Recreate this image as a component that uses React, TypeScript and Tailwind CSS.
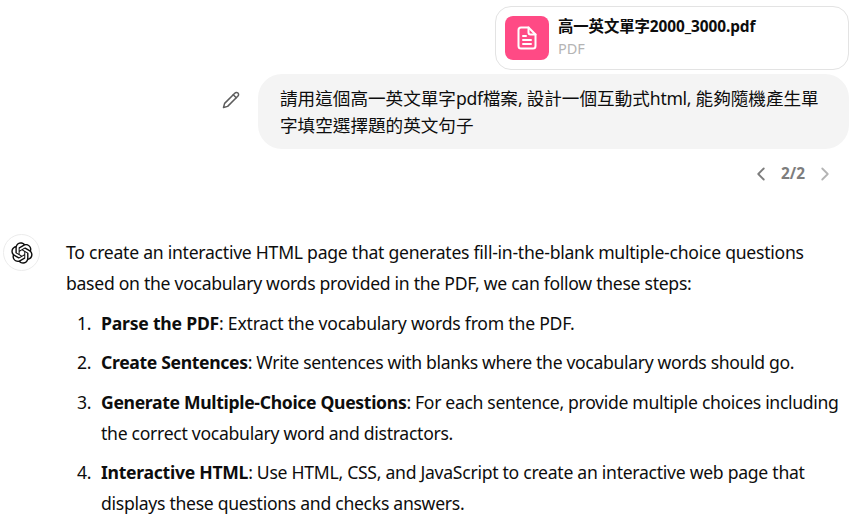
const LOGO = "M37.5324 16.8707C37.9808 15.5241 38.1363 14.0974 37.9886 12.6859C37.8409 11.2744 37.3934 9.91076 36.676 8.68622C35.6126 6.83404 33.9882 5.3676 32.0373 4.4985C30.0864 3.62941 27.9098 3.40259 25.8215 3.85078C24.8796 2.7893 23.7219 1.94125 22.4257 1.36341C21.1295 0.785575 19.7249 0.491269 18.3058 0.500197C16.1708 0.495044 14.0893 1.16803 12.3614 2.42214C10.6335 3.67624 9.34853 5.44666 8.6917 7.47815C7.30085 7.76286 5.98686 8.3414 4.8377 9.17505C3.68854 10.0087 2.73073 11.0782 2.02839 12.312C0.956464 14.1591 0.498905 16.2988 0.721698 18.4228C0.944492 20.5467 1.83612 22.5449 3.268 24.1293C2.81966 25.4759 2.66413 26.9026 2.81182 28.3141C2.95951 29.7256 3.40701 31.0892 4.12437 32.3138C5.18791 34.1659 6.8123 35.6322 8.76321 36.5013C10.7141 37.3704 12.8907 37.5973 14.9789 37.1492C15.9208 38.2107 17.0786 39.0587 18.3747 39.6366C19.6709 40.2144 21.0755 40.5087 22.4946 40.4998C24.6307 40.5054 26.7133 39.8321 28.4418 38.5772C30.1704 37.3223 31.4556 35.5506 32.1119 33.5179C33.5027 33.2332 34.8167 32.6547 35.9659 31.821C37.115 30.9874 38.0728 29.9178 38.7752 28.684C39.8458 26.8371 40.3023 24.6979 40.0789 22.5748C39.8556 20.4517 38.9639 18.4544 37.5324 16.8707ZM22.4978 37.8849C20.7443 37.8874 19.0459 37.2733 17.6994 36.1501C17.7601 36.117 17.8666 36.0586 17.936 36.0161L25.9004 31.4156C26.1003 31.3019 26.2663 31.137 26.3813 30.9378C26.4964 30.7386 26.5563 30.5124 26.5549 30.2825V19.0542L29.9213 20.998C29.9389 21.0068 29.9541 21.0198 29.9656 21.0359C29.977 21.052 29.9842 21.0707 29.9867 21.0902V30.3889C29.9842 32.375 29.1946 34.2791 27.7909 35.6841C26.3872 37.0892 24.4838 37.8806 22.4978 37.8849ZM6.39227 31.0064C5.51397 29.4888 5.19742 27.7107 5.49804 25.9832C5.55718 26.0187 5.66048 26.0818 5.73461 26.1244L13.699 30.7248C13.8975 30.8408 14.1233 30.902 14.3532 30.902C14.583 30.902 14.8088 30.8408 15.0073 30.7248L24.731 25.1103V28.9979C24.7321 29.0177 24.7283 29.0376 24.7199 29.0556C24.7115 29.0736 24.6988 29.0893 24.6829 29.1012L16.6317 33.7497C14.9096 34.7416 12.8643 35.0097 10.9447 34.4954C9.02506 33.9811 7.38785 32.7263 6.39227 31.0064ZM4.29707 13.6194C5.17156 12.0998 6.55279 10.9364 8.19885 10.3327C8.19885 10.4013 8.19491 10.5228 8.19491 10.6071V19.808C8.19351 20.0378 8.25334 20.2638 8.36823 20.4629C8.48312 20.6619 8.64893 20.8267 8.84863 20.9404L18.5723 26.5542L15.206 28.4979C15.1894 28.5089 15.1703 28.5155 15.1505 28.5173C15.1307 28.5191 15.1107 28.516 15.0924 28.5082L7.04046 23.8557C5.32135 22.8601 4.06716 21.2235 3.55289 19.3046C3.03862 17.3858 3.30624 15.3413 4.29707 13.6194ZM31.955 20.0556L22.2312 14.4411L25.5976 12.4981C25.6142 12.4872 25.6333 12.4805 25.6531 12.4787C25.6729 12.4769 25.6928 12.4801 25.7111 12.4879L33.7631 17.1364C34.9967 17.849 36.0017 18.8982 36.6606 20.1613C37.3194 21.4244 37.6047 22.849 37.4832 24.2684C37.3617 25.6878 36.8382 27.0432 35.9743 28.1759C35.1103 29.3086 33.9415 30.1717 32.6047 30.6641C32.6047 30.5947 32.6047 30.4733 32.6047 30.3889V21.188C32.6066 20.9586 32.5474 20.7328 32.4332 20.5338C32.319 20.3348 32.154 20.1698 31.955 20.0556ZM35.3055 15.0128C35.2464 14.9765 35.1431 14.9142 35.069 14.8717L27.1045 10.2712C26.906 10.1554 26.6803 10.0943 26.4504 10.0943C26.2206 10.0943 25.9948 10.1554 25.7963 10.2712L16.0726 15.8858V11.9982C16.0715 11.9783 16.0753 11.9585 16.0837 11.9405C16.0921 11.9225 16.1048 11.9068 16.1207 11.8949L24.1719 7.25025C25.4053 6.53903 26.8158 6.19376 28.2383 6.25482C29.6608 6.31589 31.0364 6.78077 32.2044 7.59508C33.3723 8.40939 34.2842 9.53945 34.8334 10.8531C35.3826 12.1667 35.5464 13.6095 35.3055 15.0128ZM14.2424 21.9419L10.8752 19.9981C10.8576 19.9893 10.8423 19.9763 10.8309 19.9602C10.8195 19.9441 10.8122 19.9254 10.8098 19.9058V10.6071C10.8107 9.18295 11.2173 7.78848 11.9819 6.58696C12.7466 5.38544 13.8377 4.42659 15.1275 3.82264C16.4173 3.21869 17.8524 2.99464 19.2649 3.1767C20.6775 3.35876 22.0089 3.93941 23.1034 4.85067C23.0427 4.88379 22.937 4.94215 22.8668 4.98473L14.9024 9.58517C14.7025 9.69878 14.5366 9.86356 14.4215 10.0626C14.3065 10.2616 14.2466 10.4877 14.2479 10.7175L14.2424 21.9419ZM16.071 17.9991L20.4018 15.4978L24.7325 17.9975V22.9985L20.4018 25.4983L16.071 22.9985V17.9991Z";

const items: { n: string; b: string; t: string[]; tr: string }[] = [
  { n: "1.", b: "Parse the PDF", t: [": Extract the vocabulary words from the PDF."], tr: "tracking-[-0.22px]" },
  { n: "2.", b: "Create Sentences", t: [": Write sentences with blanks where the vocabulary words should go."], tr: "tracking-[-0.34px]" },
  { n: "3.", b: "Generate Multiple-Choice Questions", t: [": For each sentence, provide multiple choices including", "the correct vocabulary word and distractors."], tr: "tracking-[-0.33px]" },
  { n: "4.", b: "Interactive HTML", t: [": Use HTML, CSS, and JavaScript to create an interactive web page that", "displays these questions and checks answers."], tr: "tracking-[-0.28px]" },
];

export default function App() {
  return (
    <div className="h-[519px] w-[854px] overflow-hidden bg-white text-[#0d0d0d] font-['Noto_Sans','Noto_Sans_CJK_TC',sans-serif]">
      <div className="flex flex-col items-end pt-[6px] pr-[5px]">
        <div className="flex h-[64px] w-[354px] items-center gap-[9px] rounded-[16px] border border-[#e3e3e3] bg-white pl-[9px]">
          <div className="flex h-[44px] w-[44px] items-center justify-center rounded-[8px] bg-[#ff4a85]">
            <svg width="20" height="24" viewBox="0 0 20 24" fill="none" stroke="white" strokeWidth="2" strokeLinecap="round" strokeLinejoin="round">
              <path d="M4 1.5H11.5L18.5 8.5V20C18.5 21.4 17.4 22.5 16 22.5H4C2.6 22.5 1.5 21.4 1.5 20V4C1.5 2.6 2.6 1.5 4 1.5Z" />
              <path d="M11.5 1.5V6.5C11.5 7.6 12.4 8.5 13.5 8.5H18.5" />
              <path d="M6 10H9" />
              <path d="M6 14H14" />
              <path d="M6 18H14" />
            </svg>
          </div>
          <div className="mb-[2px] flex flex-col">
            <div className="text-[15.4px] leading-[22px] font-bold tracking-[-0.08px] whitespace-nowrap">高一英文單字2000_3000.pdf</div>
            <div className="text-[14.5px] leading-[20px] text-[#b4b4b4]">PDF</div>
          </div>
        </div>
        <div className="mt-[4px] flex items-center gap-[18px]">
          <svg className="mb-[24px] text-[#5d5d5d]" width="18" height="18" viewBox="0 0 24 24" fill="none" stroke="currentColor" strokeWidth="2" strokeLinecap="round" strokeLinejoin="round">
            <path d="M17 3a2.85 2.85 0 1 1 4 4L7.5 20.5 2 22l1.5-5.5Z" />
            <path d="m15 5 4 4" />
          </svg>
          <div className="h-[75px] w-[591px] rounded-[24px] bg-[#f4f4f4] pl-[22px] pt-[11px] text-[17.6px] leading-[26.5px]">
            <div className="whitespace-nowrap">請用這個高一英文單字<span className="tracking-[-0.3px]">pdf</span>檔案<span className="tracking-[-0.3px]">, </span>設計一個互動式<span className="tracking-[-0.3px]">html, </span>能夠隨機產生單</div>
            <div className="whitespace-nowrap">字填空選擇題的英文句子</div>
          </div>
        </div>
        <div className="mt-[14px] flex h-[22px] items-center gap-[9px] pr-[13px] text-[#7d7d7d]">
          <svg width="22" height="22" viewBox="0 0 24 24" fill="none" stroke="currentColor" strokeWidth="2" strokeLinecap="round" strokeLinejoin="round"><path d="m15 18-6-6 6-6" /></svg>
          <span className="text-[15.4px] font-bold">2/2</span>
          <svg className="text-[#b4b4b4]" width="22" height="22" viewBox="0 0 24 24" fill="none" stroke="currentColor" strokeWidth="2" strokeLinecap="round" strokeLinejoin="round"><path d="m9 18 6-6-6-6" /></svg>
        </div>
      </div>
      <div className="mt-[49px] flex gap-[26px] pl-[3px] text-[17.6px] leading-[30.8px]">
        <div className="flex h-[37px] w-[37px] shrink-0 items-center justify-center rounded-full border border-[#ececec]">
          <svg width="22" height="22" viewBox="0 0 41 41" fill="#0d0d0d"><path d={LOGO} /></svg>
        </div>
        <div className="pt-[3px]">
          <p className="whitespace-nowrap tracking-[-0.26px]">To create an interactive HTML page that generates fill-in-the-blank multiple-choice questions</p>
          <p className="whitespace-nowrap tracking-[-0.29px]">based on the vocabulary words provided in the PDF, we can follow these steps:</p>
          <ol className="mt-[9px] flex flex-col gap-[8.8px]">
            {items.map((it) => (
              <li key={it.n} className="flex">
                <span className="w-[35px] shrink-0 pl-[11px] tracking-[-0.29px]">{it.n}</span>
                <div>
                  <div className={`whitespace-nowrap ${it.tr}`}><strong className="font-bold">{it.b}</strong>{it.t[0]}</div>
                  {it.t[1] && <div className="whitespace-nowrap tracking-[-0.29px]">{it.t[1]}</div>}
                </div>
              </li>
            ))}
          </ol>
        </div>
      </div>
    </div>
  );
}
